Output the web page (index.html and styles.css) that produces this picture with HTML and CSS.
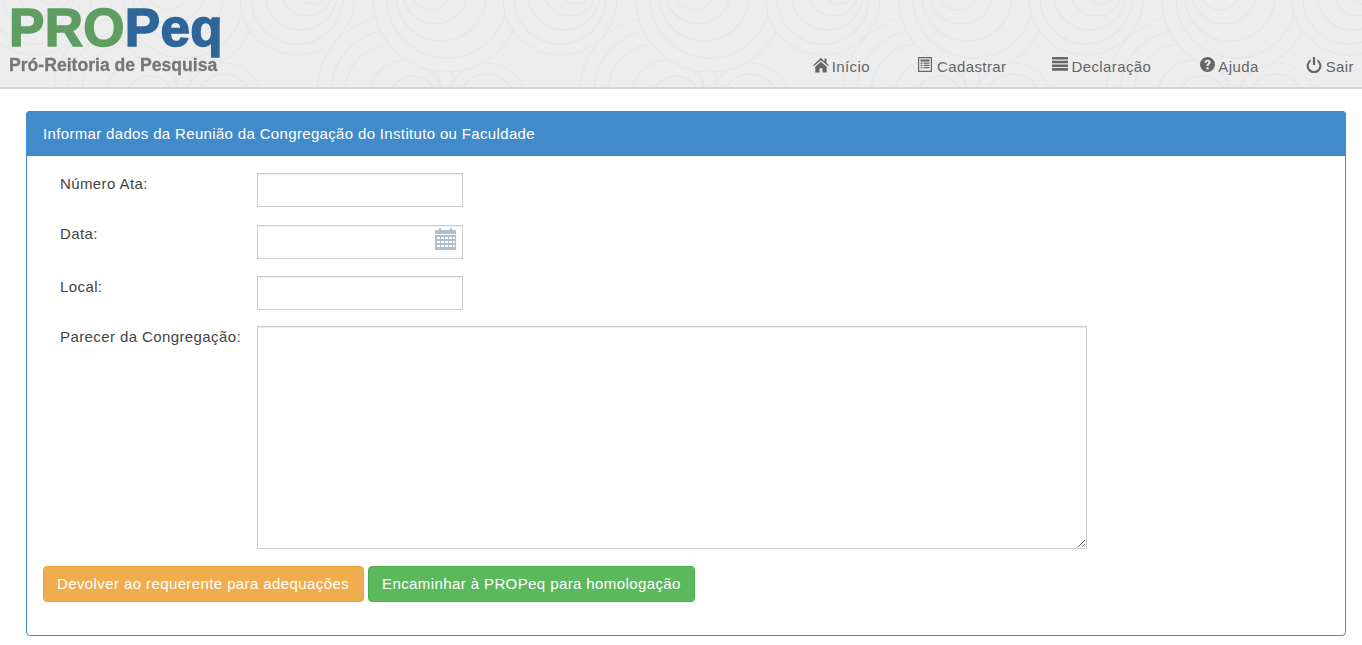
FILE: index.html
```html
<!DOCTYPE html>
<html lang="pt-BR">
<head>
    <meta charset="UTF-8">
    <title>PROPeq</title>
    <link rel="stylesheet" href="styles.css">
</head>
<body>
    <div class="topo">
        <svg class="topo-fundo" width="1362" height="87" fill="#ededed" stroke="#e6e6e6" stroke-width="1.2">
            <defs>
                <g id="baixo">
                    <circle cx="130" cy="92" r="76"/><circle cx="130" cy="92" r="62"/><circle cx="130" cy="92" r="48"/><circle cx="142" cy="96" r="36"/><circle cx="150" cy="100" r="24"/>
                    <circle cx="224" cy="102" r="39"/><circle cx="224" cy="102" r="28"/>
                </g>
                <g id="alto">
                    <circle cx="34" cy="-2" r="57"/><circle cx="34" cy="-2" r="46"/><circle cx="38" cy="-6" r="36"/><circle cx="44" cy="-10" r="26"/><circle cx="50" cy="-12" r="16"/>
                    <circle cx="184" cy="-2" r="74"/><circle cx="184" cy="-2" r="60"/><circle cx="178" cy="-4" r="45"/><circle cx="172" cy="-8" r="32"/><circle cx="168" cy="-10" r="20"/>
                </g>
                <pattern id="espirais" width="263" height="87" patternUnits="userSpaceOnUse">
                    <use href="#baixo"/>
                    <use href="#baixo" x="263"/>
                    <use href="#baixo" x="-263"/>
                    <use href="#alto"/>
                    <use href="#alto" x="263"/>
                    <use href="#alto" x="-263"/>
                </pattern>
            </defs>
            <rect width="1362" height="87" fill="url(#espirais)" stroke="none"/>
        </svg>
        <div class="logo">
            <div class="logo-nome"><span class="verde">PRO</span><span class="azul">Peq</span></div>
            <div class="logo-sub">Pró-Reitoria de Pesquisa</div>
        </div>
        <ul class="menu">
            <li class="m-inicio"><svg width="16" height="16" viewBox="0 0 16 16"><path d="M8 .8 0 8.200l1 .9L8 3.200l7 5.900 1-.9-2.500-2.300V1.500h-2v2.900zM2.300 9.800V15.500h4.200v-4.300h3v4.300h4.200V9.800L8 4.800z"/></svg>Início</li>
            <li class="m-cadastrar"><svg width="15" height="16" viewBox="0 0 15 16"><path fill-rule="evenodd" d="M0 0h14v15H0zM1.200 1.200v12.600h11.600V1.200zM2.500 2.500h9v2h-9zM2.500 5.500h2v1.200h-2zM5.500 5.500h6v1.200h-6zM2.500 7.800h2V9h-2zM5.500 7.800h6V9h-6zM2.500 10.100h2v1.200h-2zM5.500 10.100h6v1.200h-6z"/></svg>Cadastrar</li>
            <li class="m-declaracao"><svg width="16" height="14" viewBox="0 0 16 14"><path d="M0 0h16v2.600H0zM0 3.700h16v2.600H0zM0 7.400h16V10H0zM0 11.100h16v2.600H0z"/></svg>Declaração</li>
            <li class="m-ajuda"><svg width="15" height="15" viewBox="0 0 15 15"><path fill-rule="evenodd" d="M7.500 0a7.500 7.500 0 1 0 0 15 7.500 7.500 0 0 0 0-15zM6.400 10.300h2.200v2.100H6.400zM4.400 5.700C4.500 3.800 5.800 2.800 7.600 2.800c1.900 0 3.100 1 3.100 2.500 0 1.100-.6 1.700-1.300 2.200-.6.400-.9.700-.9 1.500H6.400c0-1.300.4-1.900 1.200-2.500.5-.4.800-.7.800-1.200 0-.5-.3-.8-.9-.8-.6 0-1 .4-1 1.200z"/></svg>Ajuda</li>
            <li class="m-sair"><svg width="16" height="16" viewBox="0 0 16 16"><path d="M6.900 0h2.200v8H6.900zM4.700 2.300v2.300a5.300 5.300 0 1 0 6.600 0V2.300a7.400 7.400 0 1 1-6.600 0z"/></svg>Sair</li>
        </ul>
    </div>

    <div class="painel">
        <div class="painel-titulo">Informar dados da Reunião da Congregação do Instituto ou Faculdade</div>
        <form class="painel-corpo">
            <div class="linha l-ata">
                <label for="ata">Número Ata:</label>
                <input type="text" id="ata">
            </div>
            <div class="linha l-data">
                <label for="data">Data:</label>
                <div class="campo-data">
                    <input type="text" id="data">
                    <svg class="calendario" width="21" height="22" viewBox="0 0 21 22" fill="#b0bec9"><path d="M4 0h2v3H4zM15 0h2v3h-2zM0 2h21v4H0z"/><path fill-rule="evenodd" d="M0 7h21v15H0zM2 9v2h3V9zM6 9v2h3V9zM10 9v2h3V9zM14 9v2h3V9zM18 9v2h2V9zM2 13v2h3v-2zM6 13v2h3v-2zM10 13v2h3v-2zM14 13v2h3v-2zM18 13v2h2v-2zM2 17v2h3v-2zM6 17v2h3v-2zM10 17v2h3v-2zM14 17v2h3v-2zM18 17v2h2v-2z"/></svg>
                </div>
            </div>
            <div class="linha l-local">
                <label for="local">Local:</label>
                <input type="text" id="local">
            </div>
            <div class="linha l-parecer">
                <label for="parecer">Parecer da Congregação:</label>
                <textarea id="parecer"></textarea>
            </div>
            <div class="botoes">
                <button type="button" class="btn btn-laranja">Devolver ao requerente para adequações</button>
                <button type="button" class="btn btn-verde">Encaminhar à PROPeq para homologação</button>
            </div>
        </form>
    </div>
</body>
</html>
```

FILE: styles.css
```css
html, body {
    margin: 0;
    padding: 0;
    overflow: hidden;
}

body {
    background-color: #fff;
    font-family: "Liberation Sans", Arial, sans-serif;
    font-size: 15px;
    letter-spacing: 0.4px;
    color: #444;
}

/* Topo */
.topo {
    position: relative;
    height: 87px;
    background-color: #ededed;
    border-bottom: 2px solid #d4d4d4;
    display: flex;
    justify-content: space-between;
    overflow: hidden;
}

.topo-fundo {
    position: absolute;
    top: 0;
    left: 0;
}

.logo {
    position: relative;
    padding: 0 0 0 9px;
    letter-spacing: 0;
    filter: blur(0.4px);
}

.logo-nome {
    font-size: 53px;
    font-weight: bold;
    line-height: 55px;
    letter-spacing: 0.3px;
    -webkit-text-stroke: 1.5px;
}

.verde {
    color: #5f9e62;
}

.azul {
    color: #2f6699;
}

.logo-sub {
    font-size: 17.600px;
    font-weight: bold;
    color: #777;
    line-height: 20px;
    -webkit-text-stroke: 0.3px;
}

.menu {
    position: relative;
    list-style: none;
    display: flex;
    margin: 0;
    padding: 57px 8px 0 0;
    color: #666;
}

.menu li {
    display: flex;
    align-items: flex-start;
    line-height: 20px;
}

.menu svg {
    fill: #666;
    margin: 0 3px 0 0;
}

.m-cadastrar svg, .m-sair svg {
    margin-right: 4px;
}

.m-inicio {
    margin-right: 48px;
}

.m-cadastrar {
    margin-right: 46px;
}

.m-declaracao {
    margin-right: 49px;
}

.m-ajuda {
    margin-right: 47px;
}

/* Painel */
.painel {
    margin: 22px 16px 0 26px;
    height: 523px;
    border: 1px solid #428bca;
    border-radius: 4px;
}

.painel-titulo {
    background-color: #428bca;
    color: #fff;
    height: 45px;
    line-height: 45px;
    padding-left: 17px;
    margin: -1px -1px 0;
    border-radius: 4px 4px 0 0;
    letter-spacing: 0.34px;
}

.painel-corpo {
    padding: 17px 16px 0 33px;
}

.linha {
    display: flex;
    align-items: flex-start;
}

.linha label {
    width: 197px;
    line-height: 20px;
    flex-shrink: 0;
}

.linha input, .linha textarea {
    box-sizing: border-box;
    width: 206px;
    height: 34px;
    margin: 0;
    padding: 6px 12px;
    border: 1px solid #ccc;
    background-color: #fff;
    box-shadow: inset 0 1px 1px rgba(0, 0, 0, 0.075);
    font-family: inherit;
    font-size: 14px;
    border-radius: 0;
    outline: none;
}

.linha textarea {
    width: 830px;
    height: 223px;
}

.l-ata {
    margin-bottom: 18px;
}

.l-data {
    margin-bottom: 17px;
}

.l-local {
    margin-bottom: 16px;
}

.l-ata label {
    margin-top: 1px;
}

.l-data label {
    margin-top: -1px;
}

.l-local label {
    margin-top: 1px;
}

.l-parecer label {
    margin-top: 1px;
}

.campo-data {
    position: relative;
    height: 34px;
}

.calendario {
    position: absolute;
    top: 3px;
    right: 7px;
}

.botoes {
    margin: 17px 0 0 -17px;
    display: flex;
    gap: 4px;
}

.btn {
    box-sizing: border-box;
    height: 36px;
    padding: 0 13px 2px;
    border: 1px solid transparent;
    border-radius: 4px;
    color: #fff;
    font-family: inherit;
    font-size: 15px;
    letter-spacing: 0.4px;
}

.btn-laranja {
    background-color: #f0ad4e;
    border-color: #eea236;
    padding-right: 14px;
}

.btn-verde {
    background-color: #5cb85c;
    border-color: #4cae4c;
}
```
